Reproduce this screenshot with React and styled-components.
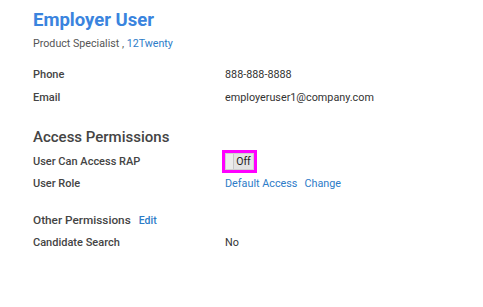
import React from "react";
import styled, { createGlobalStyle } from "styled-components";

const Global = createGlobalStyle`
  html, body { margin: 0; padding: 0; background: #fff; }
  body { font-family: Roboto, "Liberation Sans", Arial, sans-serif; }
`;

const Page = styled.div`
  padding: 8px 0 0 33px;
  width: 450px;
  box-sizing: border-box;
`;

const Title = styled.h1`
  margin: 0;
  font-size: 18.5px;
  line-height: 24px;
  font-weight: 700;
  color: #3a84de;
`;

const Subtitle = styled.div`
  margin-top: 5px;
  font-size: 10.7px;
  line-height: 14px;
  color: #555;
`;

const Link = styled.a`
  color: #2d7cc8;
  text-decoration: none;
  cursor: pointer;
  margin-left: ${(p) => p.$gap || 0}px;
`;

const Rows = styled.div`
  margin-top: ${(p) => p.$top}px;
  display: grid;
  grid-template-columns: 192px 1fr;
  grid-auto-rows: ${(p) => p.$rowH}px;
  align-items: center;
`;

const Label = styled.div`
  font-size: 11px;
  font-weight: 500;
  color: #444;
`;

const Value = styled.div`
  font-size: 10.8px;
  color: #333;
  display: flex;
  align-items: center;
`;

const SectionTitle = styled.h2`
  margin: 18px 0 0;
  font-size: 15px;
  line-height: 20px;
  font-weight: 500;
  color: #444;
`;

const SubHeading = styled.div`
  margin-top: 15px;
  height: 22px;
  display: flex;
  align-items: center;
  font-size: 11.8px;
  font-weight: 500;
  color: #444;
`;

const Toggle = styled.button`
  margin: 0;
  padding: 0;
  width: 29px;
  height: 17px;
  box-sizing: border-box;
  border: 1px solid #cfcfcf;
  background: #e4e4e4;
  outline: 3px solid #ff00ff;
  outline-offset: 0;
  display: flex;
  align-items: stretch;
  font-family: inherit;
  cursor: pointer;
`;

const Knob = styled.span`
  width: 7px;
  background: #ececec;
  border-right: 1px solid #c8c8c8;
`;

const ToggleText = styled.span`
  flex: 1;
  font-size: 10.5px;
  line-height: 15px;
  color: #222;
  text-align: center;
`;

const SmallLink = styled(Link)`
  font-size: 10.5px;
  font-weight: 500;
  margin-left: 8px;
`;

export default function App() {
  return (
    <>
      <Global />
      <Page>
        <Title>Employer User</Title>
        <Subtitle>
          Product Specialist , <Link>12Twenty</Link>
        </Subtitle>

        <Rows $top={12} $rowH={23}>
          <Label>Phone</Label>
          <Value>888-888-8888</Value>
          <Label>Email</Label>
          <Value>employeruser1@company.com</Value>
        </Rows>

        <SectionTitle>Access Permissions</SectionTitle>
        <Rows $top={3} $rowH={22}>
          <Label>User Can Access RAP</Label>
          <Value>
            <Toggle type="button">
              <Knob />
              <ToggleText>Off</ToggleText>
            </Toggle>
          </Value>
          <Label>User Role</Label>
          <Value>
            <Link>Default Access</Link>
            <Link $gap={7}>Change</Link>
          </Value>
        </Rows>

        <SubHeading>
          Other Permissions <SmallLink>Edit</SmallLink>
        </SubHeading>
        <Rows $top={0} $rowH={22}>
          <Label>Candidate Search</Label>
          <Value>No</Value>
        </Rows>
      </Page>
    </>
  );
}
